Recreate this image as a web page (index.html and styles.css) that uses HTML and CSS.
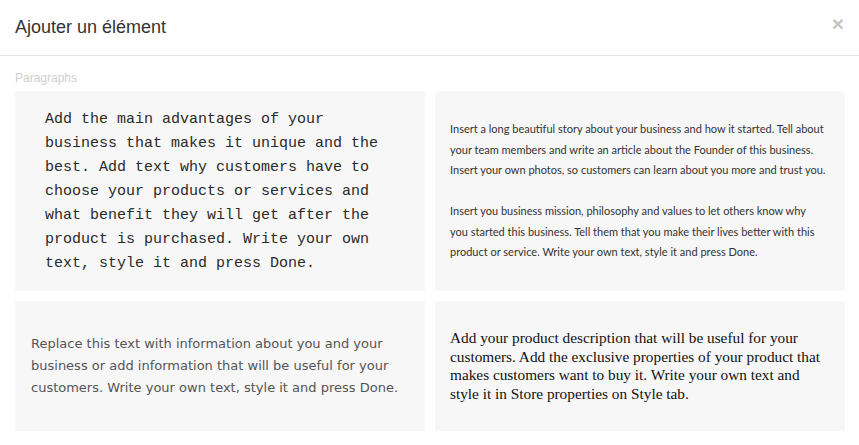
FILE: index.html
```html
<!DOCTYPE html>
<html lang="fr">
<head>
    <meta charset="UTF-8">
    <meta name="viewport" content="width=device-width, initial-scale=1.0">
    <title>Ajouter un élément</title>
    <link rel="stylesheet" href="styles.css">
</head>
<body>
    <div class="modal">
        <div class="modal-header">
            <h2>Ajouter un élément</h2>
            <button class="close-btn">&times;</button>
        </div>

        <div class="modal-body">
            <div class="section-title">Paragraphs</div>
            <div class="grid">
                <div class="card mono">
                    <p>Add the main advantages of your business that makes it unique and the best. Add text why customers have to choose your products or services and what benefit they will get after the product is purchased. Write your own text, style it and press Done.</p>
                </div>
                <div class="card story">
                    <p>Insert a long beautiful story about your business and how it started. Tell about your team members and write an article about the Founder of this business. Insert your own photos, so customers can learn about you more and trust you.</p>
                    <p>Insert you business mission, philosophy and values to let others know why you started this business. Tell them that you make their lives better with this product or service. Write your own text, style it and press Done.</p>
                </div>
                <div class="card plain">
                    <p>Replace this text with information about you and your business or add information that will be useful for your customers. Write your own text, style it and press Done.</p>
                </div>
                <div class="card serif">
                    <p>Add your product description that will be useful for your customers. Add the exclusive properties of your product that makes customers want to buy it. Write your own text and style it in Store properties on Style tab.</p>
                </div>
            </div>
        </div>
    </div>
</body>
</html>
```

FILE: styles.css
```css
body {
    font-family: 'Liberation Sans', Arial, sans-serif;
    background-color: #fff;
    margin: 0;
    padding: 0;
}

.modal {
    background-color: #fff;
}

.modal-header {
    display: flex;
    align-items: center;
    justify-content: space-between;
    height: 55px;
    padding: 0 15px;
    border-bottom: 1px solid #e5e5e5;
}

.modal-header h2 {
    margin: 0;
    font-size: 18px;
    font-weight: normal;
    color: #333;
}

.close-btn {
    background: none;
    border: none;
    padding: 0;
    margin-top: -8px;
    font-family: 'Liberation Sans', Arial, sans-serif;
    font-size: 21px;
    font-weight: bold;
    line-height: 1;
    color: #c4c4c4;
    cursor: pointer;
}

.modal-body {
    padding: 15px 14px 0 15px;
}

.section-title {
    font-size: 12px;
    color: #cfcfcf;
    margin-bottom: 6px;
}

.grid {
    display: grid;
    grid-template-columns: 410px 410px;
    grid-template-rows: 200px 130px;
    gap: 10px;
}

.card {
    background-color: #f7f7f7;
    display: flex;
    flex-direction: column;
    justify-content: center;
}

.card p {
    margin: 0;
}

.mono {
    padding: 2px 40px 0 30px;
    font-family: 'Liberation Mono', 'Courier New', monospace;
    font-size: 15px;
    line-height: 24px;
    color: #2a2a2a;
}

.story {
    padding: 0 19px 0 15px;
    font-family: Lato, sans-serif;
    font-size: 11px;
    line-height: 20.5px;
    color: #333;
}

.story p + p {
    margin-top: 20.5px;
}

.plain {
    padding: 0 12px 0 16px;
    font-family: 'DejaVu Sans', sans-serif;
    font-size: 13px;
    line-height: 22px;
    color: #555;
}

.serif {
    padding: 0 17px 0 15px;
    font-family: 'Liberation Serif', Georgia, serif;
    font-size: 15.3px;
    line-height: 18.5px;
    color: #111;
}
```
